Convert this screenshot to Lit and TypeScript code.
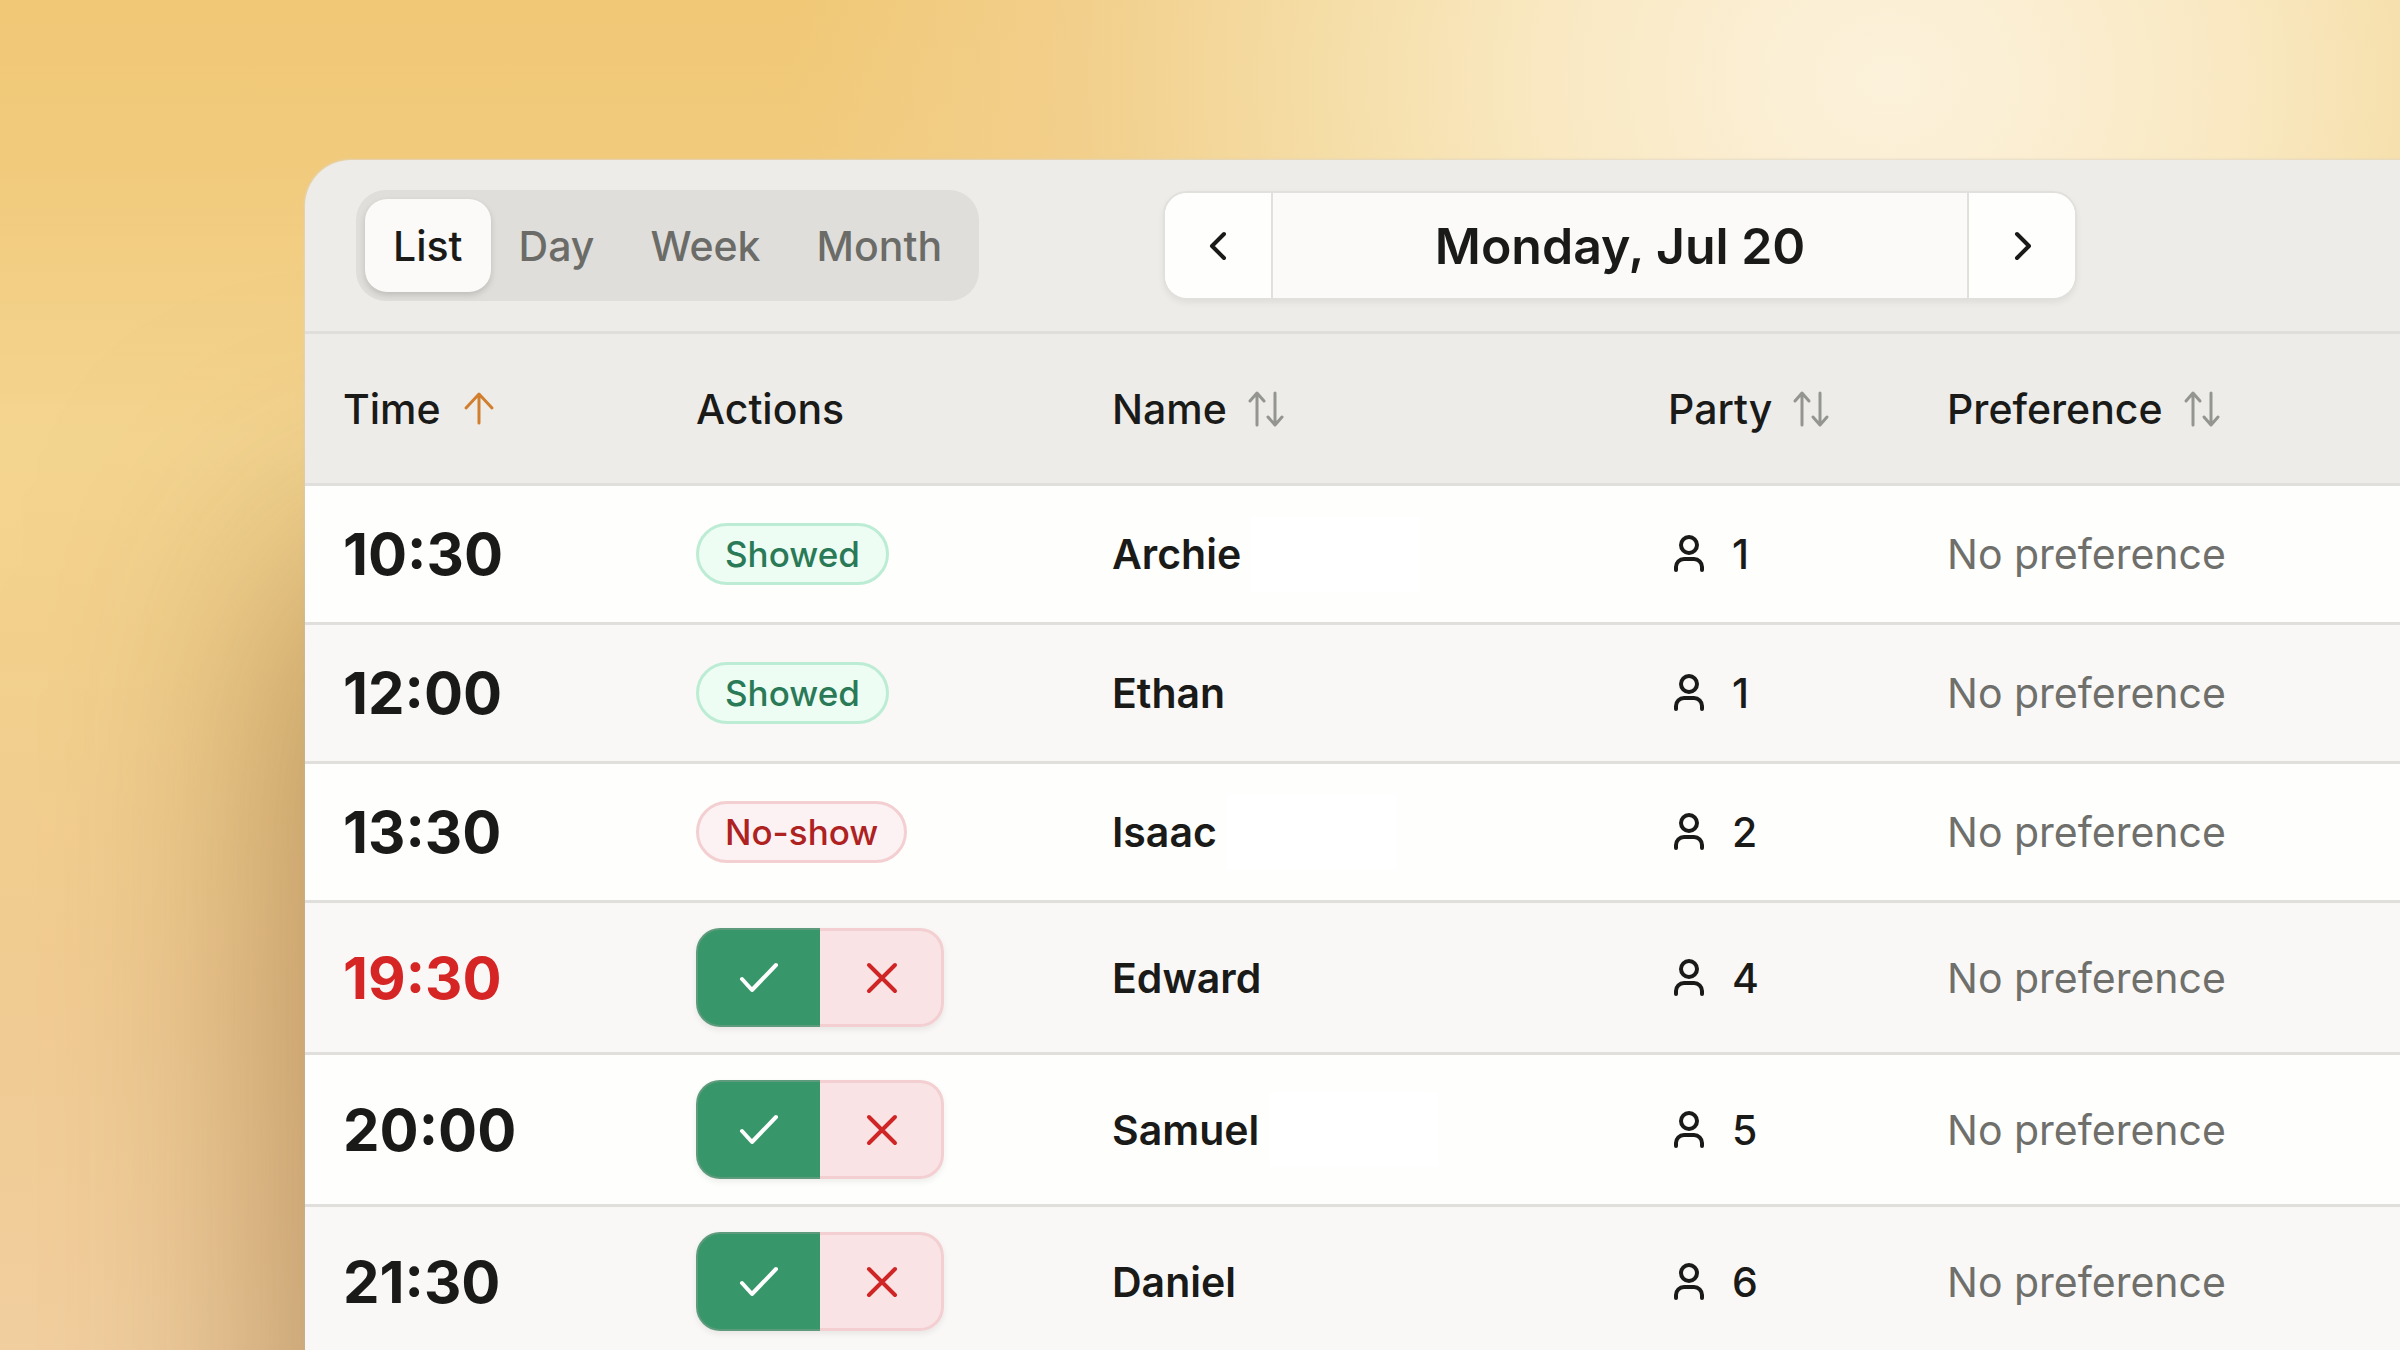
import { LitElement, html, css, svg, nothing } from "lit";
import { customElement, property, state } from "lit/decorators.js";
import { classMap } from "lit/directives/class-map.js";

type Status = "showed" | "no-show" | "pending";

interface Booking {
  time: string;
  status: Status;
  name: string;
  party: number;
  late?: boolean;
  redacted?: boolean;
}

const bookings: Booking[] = [
  { time: "10:30", status: "showed", name: "Archie", party: 1, redacted: true },
  { time: "12:00", status: "showed", name: "Ethan", party: 1 },
  { time: "13:30", status: "no-show", name: "Isaac", party: 2, redacted: true },
  { time: "19:30", status: "pending", name: "Edward", party: 4, late: true },
  { time: "20:00", status: "pending", name: "Samuel", party: 5, redacted: true },
  { time: "21:30", status: "pending", name: "Daniel", party: 6 },
];

const views = ["List", "Day", "Week", "Month"];

const shapes = {
  up: svg`<path d="M20 34V6M7 19L20 5l13 14"/>`,
  sort: svg`<path d="M10 36V5M3 12l7-8 7 8M28 4v31M21 28l7 8 7-8"/>`,
  left: svg`<path d="M26 8L14 20l12 12"/>`,
  right: svg`<path d="M15 8l12 12-12 12"/>`,
  check: svg`<path d="M3 21l10 11L37 7"/>`,
  cross: svg`<path d="M8 7l26 26M34 7L8 33"/>`,
  person: svg`<circle cx="21" cy="11" r="8"/><path d="M8 36v-3a8 8 0 0 1 8-8h10a8 8 0 0 1 8 8v3"/>`,
};

@customElement("line-icon")
class LineIcon extends LitElement {
  static styles = css`
    :host {
      display: inline-flex;
      width: 40px;
      height: 40px;
      flex: none;
    }
    .icon {
      width: 100%;
      height: 100%;
      fill: none;
      stroke: currentColor;
      stroke-width: var(--icon-stroke, 3);
      stroke-linecap: round;
      stroke-linejoin: round;
    }
  `;
  @property() name: keyof typeof shapes = "up";
  render() {
    return html`<svg class="icon" viewBox="0 0 40 40" aria-hidden="true">${shapes[this.name]}</svg>`;
  }
}

@customElement("app-root")
class AppRoot extends LitElement {
  static styles = css`
    :host {
      display: block;
      box-sizing: border-box;
      height: 100vh;
      overflow: hidden;
      padding: 160px 0 0 305px;
      font-family: Inter, "Liberation Sans", sans-serif;
      font-size: 41px;
      line-height: 50px;
      color: #1a1a19;
      background:
        radial-gradient(ellipse 1100px 1000px at 1890px 80px, #fcf1da 0%, #fbefd5 10%, #f9e8c1 32%, #f5dda6 52%, #f2cf8b 74%, rgba(240, 201, 120, 0) 100%),
        linear-gradient(180deg, #f0c876 0, #f1ca7c 160px, #f4d590 440px, #f3d18d 650px, #f1cc93 1000px, #f2cf9f 1350px);
    }
    * {
      box-sizing: border-box;
    }
    button {
      margin: 0;
      padding: 0;
      border: 0;
      background: none;
      font: inherit;
      color: inherit;
      cursor: pointer;
    }
    .card {
      min-height: 1300px;
      border-top-left-radius: 46px;
      background: #edece9;
      box-shadow: 0 400px 300px 0 rgba(125, 85, 40, 0.6), 0 0 2px 1px rgba(225, 215, 195, 0.8);
    }
    .toolbar {
      display: flex;
      align-items: center;
      gap: 184px;
      height: 174px;
      padding-left: 51px;
      border-bottom: 3px solid #dfdedb;
    }
    .views {
      display: flex;
      padding: 9px;
      border-radius: 30px;
      background: #dfdeda;
    }
    .view {
      height: 93px;
      padding: 0 28px;
      border-radius: 22px;
      font-weight: 500;
      color: #6b6b68;
    }
    .view.active {
      background: #fbfaf8;
      color: #1a1a19;
      box-shadow: 0 3px 6px rgba(0, 0, 0, 0.15);
    }
    .date-nav {
      display: flex;
      width: 914px;
      height: 109px;
      border: 2px solid #e1e0dc;
      border-radius: 24px;
      background: #fbfaf8;
      box-shadow: 0 3px 6px rgba(0, 0, 0, 0.06);
      overflow: hidden;
    }
    .step {
      display: grid;
      place-items: center;
      width: 106px;
      background: #fefefc;
      --icon-stroke: 4;
    }
    .date {
      flex: 1;
      display: grid;
      place-items: center;
      margin: 0;
      border: solid #e1e0dc;
      border-width: 0 2px;
      font-size: 50px;
      font-weight: 600;
    }
    .bookings {
      width: 100%;
      table-layout: fixed;
      border-collapse: separate;
      border-spacing: 0;
      text-align: left;
    }
    .col-time {
      width: 353px;
    }
    .col-actions {
      width: 416px;
    }
    .col-name {
      width: 556px;
    }
    .col-party {
      width: 279px;
    }
    th,
    td {
      padding: 0 0 0 38px;
      border-bottom: 3px solid #e0dfdc;
      vertical-align: middle;
      white-space: nowrap;
    }
    th {
      height: 152px;
      font-weight: 500;
    }
    td {
      height: 139px;
    }
    .row {
      background: #fefefc;
    }
    .row:nth-child(even) {
      background: #f9f8f6;
    }
    .row.pending td {
      height: 152px;
    }
    .sort {
      display: inline-flex;
      align-items: center;
      gap: 20px;
      color: #949491;
    }
    .sort.active {
      gap: 18px;
      color: #d17f2e;
    }
    .label {
      color: #1a1a19;
    }
    .time {
      font-size: 58px;
      font-weight: 700;
    }
    .late {
      color: #d62525;
    }
    .badge {
      display: inline-flex;
      align-items: center;
      height: 62px;
      padding: 0 26px;
      border: 3px solid #bdecd4;
      border-radius: 31px;
      background: #edfdf4;
      color: #2b7a57;
      font-size: 35px;
      font-weight: 500;
    }
    .badge.missed {
      border-color: #f3cfd1;
      background: #fcf2f3;
      color: #ae2222;
    }
    .cell {
      display: flex;
      align-items: center;
    }
    .answer {
      display: inline-flex;
      border-radius: 24px;
      box-shadow: 0 3px 6px rgba(0, 0, 0, 0.07);
    }
    .choice {
      display: grid;
      place-items: center;
      width: 124px;
      height: 99px;
      border: 2px solid #5d9b7c;
      border-right: 0;
      border-radius: 24px 0 0 24px;
      background: #37976a;
      color: #ffffff;
      --icon-stroke: 4;
    }
    .choice.no {
      border: 3px solid #f3cfd1;
      border-left: 0;
      border-radius: 0 24px 24px 0;
      background: #f9e3e5;
      color: #d02525;
    }
    .name {
      font-weight: 600;
      gap: 10px;
    }
    .redaction {
      width: 169px;
      height: 75px;
      background: #ffffff;
    }
    .party {
      gap: 24px;
      font-weight: 500;
      --icon-stroke: 4;
    }
    .preference {
      color: #6f6f6c;
    }
  `;

  @state() private view = "List";

  private heading(label: string, active = false) {
    return html`<button class=${classMap({ sort: true, active })}>
      <span class="label">${label}</span><line-icon name=${active ? "up" : "sort"}></line-icon>
    </button>`;
  }

  private action(status: Status) {
    if (status === "showed") return html`<span class="badge">Showed</span>`;
    if (status === "no-show") return html`<span class="badge missed">No-show</span>`;
    return html`<div class="answer">
      <button class="choice" aria-label="Mark as showed"><line-icon name="check"></line-icon></button>
      <button class="choice no" aria-label="Mark as no-show"><line-icon name="cross"></line-icon></button>
    </div>`;
  }

  private row(b: Booking) {
    return html`<tr class=${classMap({ row: true, pending: b.status === "pending" })}>
      <td class=${classMap({ time: true, late: !!b.late })}>${b.time}</td>
      <td><div class="cell">${this.action(b.status)}</div></td>
      <td>
        <div class="cell name">${b.name}${b.redacted ? html`<span class="redaction"></span>` : nothing}</div>
      </td>
      <td>
        <div class="cell party"><line-icon name="person"></line-icon>${b.party}</div>
      </td>
      <td class="preference">No preference</td>
    </tr>`;
  }

  render() {
    return html`<main class="card">
      <header class="toolbar">
        <nav class="views" aria-label="View">
          ${views.map(
            (v) => html`<button
              class=${classMap({ view: true, active: v === this.view })}
              aria-pressed=${v === this.view}
              @click=${() => (this.view = v)}
            >${v}</button>`
          )}
        </nav>
        <div class="date-nav">
          <button class="step" aria-label="Previous day"><line-icon name="left"></line-icon></button>
          <h1 class="date">Monday, Jul 20</h1>
          <button class="step" aria-label="Next day"><line-icon name="right"></line-icon></button>
        </div>
      </header>
      <table class="bookings">
        <colgroup>
          <col class="col-time" /><col class="col-actions" /><col class="col-name" /><col class="col-party" /><col />
        </colgroup>
        <thead>
          <tr>
            <th>${this.heading("Time", true)}</th>
            <th>Actions</th>
            <th>${this.heading("Name")}</th>
            <th>${this.heading("Party")}</th>
            <th>${this.heading("Preference")}</th>
          </tr>
        </thead>
        <tbody>
          ${bookings.map((b) => this.row(b))}
        </tbody>
      </table>
    </main>`;
  }
}
